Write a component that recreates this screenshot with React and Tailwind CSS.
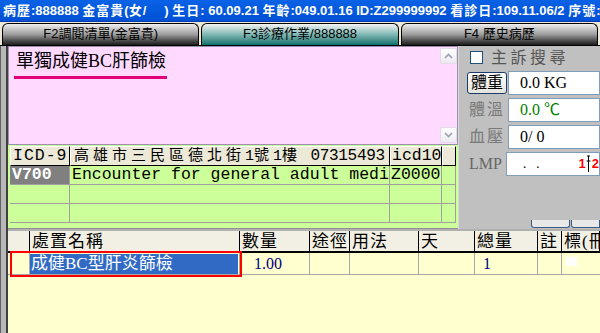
import React from 'react'

const serif = "font-['Liberation_Serif','Noto_Sans_CJK_TC',serif]"
const mono = "font-['Liberation_Mono','Noto_Sans_CJK_TC',monospace]"

function Chevron({ up }) {
  return (
    <svg width="9" height="6" viewBox="0 0 9 6" className="text-[#9aa0b0]">
      <path d={up ? 'M1 5 L4.5 1.5 L8 5' : 'M1 1 L4.5 4.5 L8 1'} fill="none" stroke="currentColor" strokeWidth="1.6" />
    </svg>
  )
}

function Tab({ label, active }) {
  return (
    <div
      className={`flex-1 h-full rounded-t-[6px] border border-black border-b-0 flex items-center justify-center text-[13px] text-black font-['Liberation_Sans','Noto_Sans_CJK_TC',sans-serif] ${
        active
          ? 'bg-gradient-to-b from-[#f4f4f4] via-[#7fb8b4] to-[#00706c]'
          : 'bg-gradient-to-b from-[#f0f0f0] via-[#9c9c9c] to-[#1c1c1c]'
      }`}
    >
      <span className="-mt-[1px]">{label}</span>
    </div>
  )
}

// wider CJK glyphs in the title bar
const C = ({ children }) => <span className="tracking-[1px]">{children}</span>

function VitalRow({ label, value, green, button }) {
  return (
    <div className="flex items-center h-[24px] mb-[3px]">
      <div className="w-[49px] pl-[8px] flex items-center">
        {button ? (
          <div className={`w-[40px] h-[22px] rounded-[3px] border border-[#1c3a6e] bg-gradient-to-b from-white to-[#e4e4dc] flex items-center justify-center text-[16px] text-black ${serif}`}>
            {label}
          </div>
        ) : (
          <span className={`pl-[2px] text-[16px] tracking-[2px] text-[#7a7a7a] ${serif}`}>{label}</span>
        )}
      </div>
      <div className={`flex-1 h-full bg-white border border-[#7f9db9] pl-[11px] flex items-center text-[16px] ${serif} ${green ? 'text-[#008000]' : 'text-black'}`}>
        {value}
      </div>
    </div>
  )
}

const headCols = ['', '處置名稱', '數量', '途徑', '用法', '天', '總量', '註', '標(冊']

export default function App() {
  return (
    <div className="w-[600px] h-[333px] overflow-hidden bg-[#c0c0c0] flex flex-col">
      {/* title bar */}
      <div className="h-[22px] shrink-0 bg-gradient-to-b from-[#0a62e6] to-[#0050d4] border-b border-[#003cb0] pl-[3px] flex items-center whitespace-nowrap overflow-hidden text-white font-bold text-[13px] font-['Liberation_Sans','Noto_Sans_CJK_TC',sans-serif]">
        <span>
          <C>病歷</C>:888888 <C>金富貴</C>(<C>女</C>/<span className="inline-block w-[18px]" />) <C>生日</C>: 60.09.21 <C>年齡</C>:049.01.16 ID:Z299999992 <C>看診日</C>:109.11.06/2 <C>序號</C>:1 <C>室</C>
        </span>
      </div>

      {/* tabs */}
      <div className="h-[24px] shrink-0 bg-[#ece9d8] flex gap-[2px] px-[2px] pt-[1px] border-b border-black">
        <Tab label="F2調閱清單(金富貴)" />
        <Tab label="F3診療作業/888888" active />
        <Tab label="F4 歷史病歷" />
      </div>

      <div className="flex flex-1 min-h-0">
        {/* left frame */}
        <div className="w-[8px] shrink-0 bg-[#b8b8b8] border-l border-[#606060] border-r-2 border-r-[#404040]" />

        <div className="flex-1 flex flex-col min-w-0">
          <div className="flex h-[183px] shrink-0">
            <div className="w-[450px] flex flex-col">
              {/* memo */}
              <div className="h-[99px] bg-[#ffd9ff] border border-[#9a90b0] flex">
                <div className="flex-1 pl-[5px] pt-[2px]">
                  <div className={`inline-block text-[18px] leading-[24px] text-black border-b-[3px] border-[#e0007a] pr-[1px] pl-[2px] pb-[3px] ${serif}`}>
                    單獨成健BC肝篩檢
                  </div>
                </div>
                <div className="w-[17px] flex flex-col justify-between py-[1px]">
                  <div className="h-[16px] rounded-[2px] border border-[#e0dce8] bg-gradient-to-b from-white to-[#eceaf0] flex items-center justify-center"><Chevron up /></div>
                  <div className="h-[16px] rounded-[2px] border border-[#e0dce8] bg-gradient-to-b from-white to-[#eceaf0] flex items-center justify-center"><Chevron /></div>
                </div>
              </div>

              {/* icd grid */}
              <div className="flex-1 bg-[#ccff99] pl-[2px] pt-[1px] border-b border-[#909090]">
                <div className="grid grid-cols-[60px_320px_52px_14px] w-[446px]">
                  <div className={`h-[20px] bg-[#ece9d8] border-t border-l border-white border-r border-b border-r-black border-b-black pl-[2px] text-[16.5px] leading-[18px] tracking-[1px] ${mono}`}>ICD-9</div>
                  <div className={`h-[20px] bg-[#ece9d8] border-t border-l border-white border-r border-b border-r-black border-b-black pl-[3px] text-[15px] leading-[18px] whitespace-nowrap overflow-hidden ${mono}`}>
                    <span className="tracking-[4px]">高雄市三民區德北街</span>1<span className="tracking-[4px]">號</span>1<span className="tracking-[4px]">樓</span>
                    <span className="text-[16px] tracking-[-0.3px]"> 07315493</span>
                  </div>
                  <div className={`h-[20px] bg-[#ece9d8] border-t border-l border-white border-r border-b border-r-black border-b-black pl-[1px] text-[16.5px] leading-[18px] ${mono}`}>icd10</div>
                  <div className="h-[20px] bg-[#ece9d8] border-t border-l border-white border-r border-b border-r-black border-b-black" />

                  <div className={`h-[19px] bg-[#808080] text-white font-bold border-r border-b border-[#a0a0a0] pl-[2px] text-[16.5px] leading-[18px] ${mono}`}>V700</div>
                  <div className={`h-[19px] border-r border-b border-[#a0a0a0] pl-[2px] text-[16.5px] leading-[18px] whitespace-nowrap overflow-hidden ${mono}`}>Encounter for general adult medi</div>
                  <div className={`h-[19px] border-r border-b border-[#a0a0a0] pl-[1px] text-[16.5px] leading-[18px] ${mono}`}>Z0000</div>
                  <div className="h-[19px] border-r border-b border-[#a0a0a0]" />

                  {[0, 1].map(r => (
                    <React.Fragment key={r}>
                      <div className="h-[19px] border-r border-b border-[#a0a0a0]" />
                      <div className="h-[19px] border-r border-b border-[#a0a0a0]" />
                      <div className="h-[19px] border-r border-b border-[#a0a0a0]" />
                      <div className="h-[19px] border-r border-b border-[#a0a0a0]" />
                    </React.Fragment>
                  ))}
                </div>
              </div>
            </div>

            {/* right panel */}
            <div className="flex-1 flex flex-col pt-[3px] border-l border-[#d8d8d8]">
              <div className="flex items-center h-[17px] pl-[11px] mb-[5px]">
                <div className="w-[13px] h-[13px] bg-white border border-[#1c5180]" />
                <span className={`ml-[8px] text-[16px] tracking-[3.5px] text-[#555] ${serif}`}>主訴搜尋</span>
              </div>
              <VitalRow label="體重" value="0.0 KG" button />
              <VitalRow label="體溫" value="0.0 ℃" green />
              <VitalRow label="血壓" value="0/ 0" />
              <div className="flex items-center h-[24px]">
                <span className={`w-[47px] pl-[10px] text-[16px] text-[#666] ${serif}`}>LMP</span>
                <div className="flex-1 h-full bg-white border border-[#7f9db9] flex items-center relative">
                  <span className="ml-[16px] text-[12px] leading-none text-black">.</span>
                  <span className="ml-[10px] text-[12px] leading-none text-black">.</span>
                  <div className="ml-auto flex items-center text-[#ff0000] font-bold text-[13px] font-['Liberation_Sans',sans-serif]">
                    <span>1</span>
                    <svg width="5" height="18" viewBox="0 0 5 18" className="mx-[0.5px]">
                      <path d="M2.5 1 V17 M0.5 6 H4.5 M1 1 H4" stroke="#000" strokeWidth="1" fill="none" />
                    </svg>
                    <span>2</span>
                  </div>
                </div>
              </div>
              <div className="mt-auto flex gap-[1px] pl-[72px] pb-[1px]">
                <div className="w-[39px] h-[8px] bg-[#e8e8e8] border border-t-0 border-[#3c5a80] rounded-b-[3px]" />
                <div className="flex-1 h-[8px] bg-[#e8e8e8] border border-t-0 border-[#3c5a80] rounded-bl-[3px]" />
              </div>
            </div>
          </div>

          {/* order table */}
          <div className="flex-1 bg-[#ffffd0] relative border-t-2 border-[#b0b0b0]">
            <div className="grid grid-cols-[22px_210px_70px_40px_69px_56px_63px_24px_1fr] h-[22px] bg-[#f2f0e4] border-b-2 border-black">
              {headCols.map((h, i) => (
                <div key={i} className={`border-r border-black pl-[2px] text-[17px] leading-[22px] tracking-[1px] whitespace-nowrap overflow-hidden ${serif}`}>{h}</div>
              ))}
            </div>
            <div className="grid grid-cols-[22px_210px_70px_40px_69px_56px_63px_24px_1fr] h-[22px] border-b border-[#a8a8a8]">
              <div className="border-r border-[#a8a8a8]" />
              <div className="border-r border-[#a8a8a8] py-[1px] pr-[1px]">
                <div className={`h-full bg-[#316ac5] text-white pl-[1px] text-[17px] leading-[20px] ${serif}`}>成健BC型肝炎篩檢</div>
              </div>
              <div className={`border-r border-[#a8a8a8] pl-[14px] text-[16px] leading-[22px] text-[#000080] ${serif}`}>1.00</div>
              <div className="border-r border-[#a8a8a8]" />
              <div className="border-r border-[#a8a8a8]" />
              <div className="border-r border-[#a8a8a8]" />
              <div className={`border-r border-[#a8a8a8] pl-[8px] text-[16px] leading-[22px] text-[#000080] ${serif}`}>1</div>
              <div className="border-r border-[#a8a8a8]" />
              <div className="pl-[4px] pt-[4px]">
                <div className="w-[11px] h-[9px] bg-white" />
              </div>
            </div>
            <div className="absolute left-[2px] top-[20px] w-[232px] h-[26px] border-2 border-[#ff0000]" />
          </div>
        </div>
      </div>
    </div>
  )
}
